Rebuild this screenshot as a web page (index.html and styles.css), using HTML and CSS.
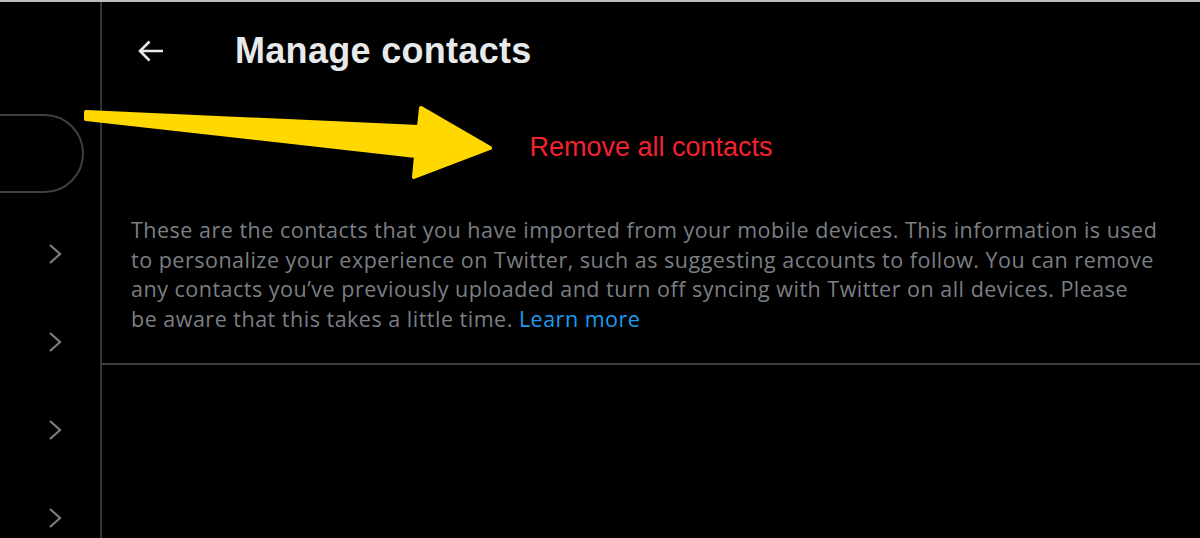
FILE: index.html
```html
<!DOCTYPE html>
<html lang="en">
<head>
<meta charset="utf-8">
<title>Manage contacts</title>
<link rel="stylesheet" href="styles.css">
</head>
<body>
<div class="topline"></div>
<div class="app">
  <aside class="sidebar">
    <div class="search-pill"></div>
    <ul class="nav">
      <li class="nav-row"><svg class="chev" viewBox="0 0 14 22"><path d="M2 2 L12 11 L2 20"/></svg></li>
      <li class="nav-row"><svg class="chev" viewBox="0 0 14 22"><path d="M2 2 L12 11 L2 20"/></svg></li>
      <li class="nav-row"><svg class="chev" viewBox="0 0 14 22"><path d="M2 2 L12 11 L2 20"/></svg></li>
      <li class="nav-row"><svg class="chev" viewBox="0 0 14 22"><path d="M2 2 L12 11 L2 20"/></svg></li>
    </ul>
  </aside>
  <main class="main">
    <header class="header">
      <button class="back" aria-label="Back">
        <svg viewBox="0 0 26 22"><path d="M25 11 H2 M11.5 1.5 L2 11 L11.5 20.5"/></svg>
      </button>
      <h1 class="title">Manage contacts</h1>
    </header>
    <div class="action-row">
      <button class="remove">Remove all contacts</button>
    </div>
    <section class="info">
      <p class="desc">These are the contacts that you have imported from your mobile devices. This information is used to personalize your experience on Twitter, such as suggesting accounts to follow. You can remove any contacts you’ve previously uploaded and turn off syncing with Twitter on all devices. Please be aware that this takes a little time. <a class="link" href="#">Learn more</a></p>
    </section>
  </main>
</div>
<svg class="annotation" viewBox="0 0 1200 538" width="1200" height="538">
  <polygon points="86,112 419,127 421,108 490,148 414,177 416,156 86,119" fill="#ffd800" stroke="#ffd800" stroke-width="4" stroke-linejoin="round"/>
</svg>
</body>
</html>
```
FILE: styles.css
```css
* { box-sizing: border-box; }
html, body {
  margin: 0;
  padding: 0;
  background: #000;
  width: 1200px;
  height: 538px;
  overflow: hidden;
  font-family: "Liberation Sans", Arial, sans-serif;
  position: relative;
}
.topline {
  height: 2px;
  background: #bdbdbd;
}
.app {
  display: flex;
  height: 536px;
}
.sidebar {
  width: 102px;
  flex: 0 0 102px;
  border-right: 2px solid #353535;
  overflow: hidden;
  padding-top: 112px;
}
.search-pill {
  width: 124px;
  height: 79px;
  margin-left: -40px;
  border: 2px solid #3f3f3f;
  border-radius: 40px;
}
.nav {
  list-style: none;
  margin: 17px 0 0;
  padding: 0;
}
.nav-row {
  height: 88px;
  display: flex;
  align-items: center;
  padding-left: 48px;
}
.chev {
  width: 14px;
  height: 22px;
}
.chev path {
  fill: none;
  stroke: #7a7e82;
  stroke-width: 2.2;
}
.main {
  flex: 1;
  display: flex;
  flex-direction: column;
}
.header {
  height: 98px;
  display: flex;
  align-items: center;
  padding-left: 35px;
}
.back {
  background: none;
  border: 0;
  padding: 0;
  width: 28px;
  height: 24px;
  display: flex;
  align-items: center;
  justify-content: center;
  margin-right: 70px;
}
.back svg {
  width: 26px;
  height: 22px;
}
.back path {
  fill: none;
  stroke: #e7e9ea;
  stroke-width: 2.6;
}
.title {
  margin: 0;
  font-size: 36px;
  font-weight: 700;
  color: #e7e9ea;
  letter-spacing: 0.3px;
}
.action-row {
  height: 94px;
  display: flex;
  align-items: center;
  justify-content: center;
}
.remove {
  background: none;
  border: 0;
  padding: 0;
  font-family: "Liberation Sans", Arial, sans-serif;
  font-size: 27px;
  color: #f4212e;
}
.info {
  padding: 21px 42px 30px 29px;
  border-bottom: 2px solid #3e3e3e;
}
.desc {
  margin: 0;
  font-family: "Open Sans", "Liberation Sans", sans-serif;
  font-size: 21.5px;
  letter-spacing: 0.5px;
  line-height: 29.5px;
  color: #7b7f84;
}
.link {
  color: #1d9bf0;
  text-decoration: none;
}
.annotation {
  position: absolute;
  left: 0;
  top: 0;
  pointer-events: none;
}
```
